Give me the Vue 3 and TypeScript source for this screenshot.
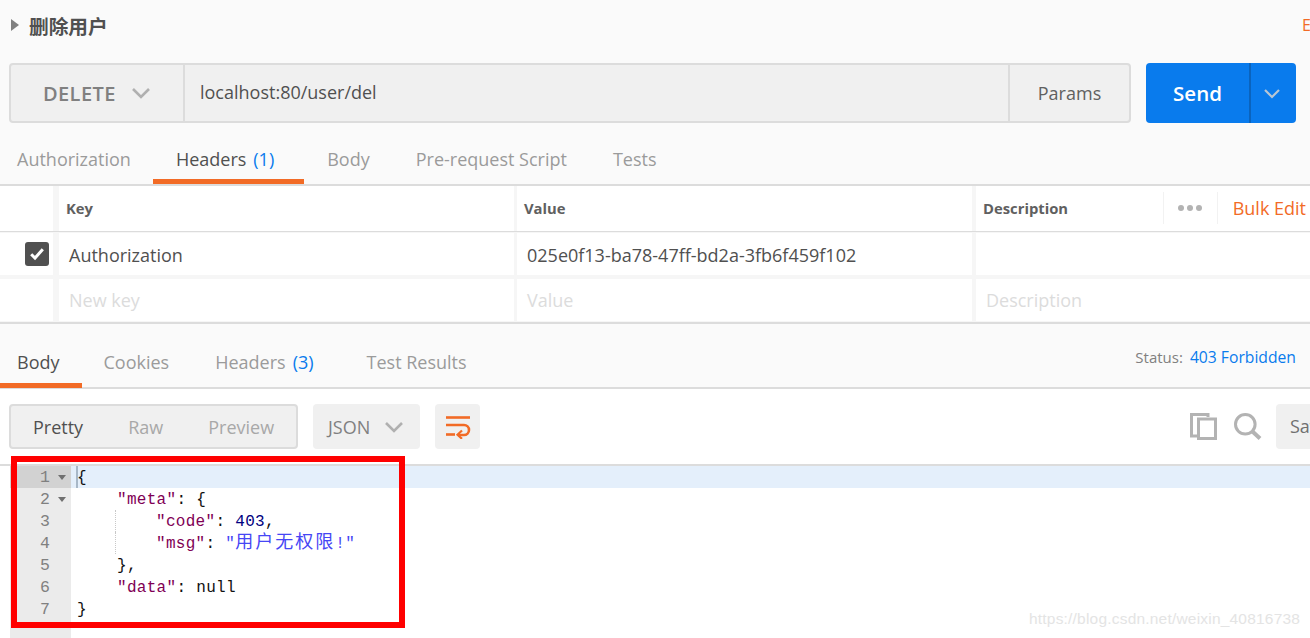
<script setup lang="ts">
interface Tab { label: string; count?: string; active?: boolean }
const requestTabs: Tab[] = [
  { label: 'Authorization' },
  { label: 'Headers', count: '(1)', active: true },
  { label: 'Body' },
  { label: 'Pre-request Script' },
  { label: 'Tests' },
]
const responseTabs: Tab[] = [
  { label: 'Body', active: true },
  { label: 'Cookies' },
  { label: 'Headers', count: '(3)' },
  { label: 'Test Results' },
]
const gutter = [1, 2, 3, 4, 5, 6, 7]
</script>

<template>
  <div class="page">
    <header class="title-row">
      <span class="caret"></span>
      <h1 class="title">删除用户</h1>
      <span class="edit">E</span>
    </header>

    <section class="url-row">
      <div class="url-bar">
        <div class="method">
          <span>DELETE</span>
          <svg class="chev" width="20" height="12" viewBox="0 0 20 12"><path d="M2 2l8 8 8-8" fill="none" stroke="#b0b0b0" stroke-width="2.6" /></svg>
        </div>
        <div class="url">localhost:80/user/del</div>
        <div class="params">Params</div>
      </div>
      <div class="send">
        <span class="send-label">Send</span>
        <span class="send-more">
          <svg width="18" height="11" viewBox="0 0 18 11"><path d="M2 2l7 7 7-7" fill="none" stroke="#b9c6d4" stroke-width="2.2" /></svg>
        </span>
      </div>
    </section>

    <nav class="tabs request-tabs">
      <div v-for="t in requestTabs" :key="t.label" class="tab" :class="{ active: t.active }">
        <span>{{ t.label }}</span><span v-if="t.count" class="count">{{ t.count }}</span>
      </div>
    </nav>

    <section class="table">
      <div class="row head">
        <div class="cell c0"></div>
        <div class="cell c1">Key</div>
        <div class="cell c2">Value</div>
        <div class="cell c3">
          <span>Description</span>
          <div class="head-tools">
            <span class="dots"><i></i><i></i><i></i></span>
            <span class="bulk">Bulk Edit</span>
          </div>
        </div>
      </div>
      <div class="row body-row first">
        <div class="cell c0">
          <span class="check">
            <svg width="16" height="14" viewBox="0 0 16 14"><path d="M2.2 7.300l3.800 3.800 7.800-8.800" fill="none" stroke="#fff" stroke-width="3" /></svg>
          </span>
        </div>
        <div class="cell c1">Authorization</div>
        <div class="cell c2">025e0f13-ba78-47ff-bd2a-3fb6f459f102</div>
        <div class="cell c3"></div>
      </div>
      <div class="row body-row second">
        <div class="cell c0"></div>
        <div class="cell c1 ph">New key</div>
        <div class="cell c2 ph">Value</div>
        <div class="cell c3 ph">Description</div>
      </div>
    </section>

    <section class="response-head">
      <nav class="tabs response-tabs">
        <div v-for="t in responseTabs" :key="t.label" class="tab" :class="{ active: t.active }">
          <span>{{ t.label }}</span><span v-if="t.count" class="count">{{ t.count }}</span>
        </div>
      </nav>
      <div class="status">Status:<span class="status-val">403 Forbidden</span></div>
    </section>

    <section class="toolbar">
      <div class="views">
        <span class="view on">Pretty</span>
        <span class="view">Raw</span>
        <span class="view">Preview</span>
      </div>
      <div class="format">
        <span>JSON</span>
        <svg width="20" height="12" viewBox="0 0 20 12"><path d="M2 2l8 8 8-8" fill="none" stroke="#b0b0b0" stroke-width="2.6" /></svg>
      </div>
      <div class="wrap">
        <svg width="26" height="24" viewBox="0 0 26 24" fill="none" stroke="#f26b26" stroke-width="2.6">
          <path d="M1 2.5h24" />
          <path d="M1 10h18a5 5 0 0 1 0 10h-6" />
          <path d="M1 19.500h9" />
          <path d="M17 15.500l-4.500 4.300 4.500 4" stroke-width="2.2" />
        </svg>
      </div>
      <div class="tools">
        <svg width="27" height="27" viewBox="0 0 27 27" fill="none" stroke="#b3b3b3" stroke-width="3">
          <path d="M18 4V1.500H1.500V23H7" />
          <rect x="8.500" y="6" width="17" height="19.500" />
        </svg>
        <svg class="search" width="28" height="27" viewBox="0 0 28 27" fill="none" stroke="#b3b3b3">
          <circle cx="11.300" cy="11.300" r="9.800" stroke-width="3" />
          <path d="M18.500 18.500l7.500 7" stroke-width="4" />
        </svg>
        <div class="save">Save</div>
      </div>
    </section>

    <section class="editor">
      <div class="gutter">
        <div v-for="n in gutter" :key="n" class="gnum" :class="{ cur: n === 1 }">
          <span>{{ n }}</span>
          <i v-if="n < 3" class="fold"></i>
        </div>
      </div>
      <div class="code">
        <div class="line cur"><span class="cursor"></span>{</div>
        <div class="line ind1"><span class="k">"meta"</span>: {</div>
        <div class="line ind2 guide"><span class="k">"code"</span>: <span class="n">403</span>,</div>
        <div class="line ind2 guide"><span class="k">"msg"</span>: <span class="s">"<span class="cjk">用户无权限</span>!"</span></div>
        <div class="line ind1">},</div>
        <div class="line ind1"><span class="k">"data"</span>: null</div>
        <div class="line">}</div>
      </div>
    </section>

    <div class="redbox"></div>
    <div class="mark">https://blog.csdn.net/weixin_40816738</div>
  </div>
</template>

<style>
html, body { margin: 0; background: #fff; }
</style>

<style scoped>
.page {
  position: relative;
  width: 1310px;
  height: 638px;
  overflow: hidden;
  background: #fff;
  font-family: "Open Sans", "Noto Sans CJK SC", sans-serif;
  font-size: 18px;
  color: #505050;
}
.title-row {
  height: 63px;
  box-sizing: border-box;
  padding: 0 0 13px 11px;
  display: flex;
  align-items: center;
  background: #fafafa;
}
.caret {
  width: 0;
  height: 0;
  border-left: 8px solid #808080;
  border-top: 6px solid transparent;
  border-bottom: 6px solid transparent;
  margin-right: 10px;
}
.title {
  margin: 0;
  font-size: 19.700px;
  font-weight: 700;
  color: #505050;
  font-family: "Noto Sans CJK SC", sans-serif;
}
.edit { margin-left: auto; color: #f26b26; font-size: 16px; margin-right: -1px; }

.url-row {
  height: 60px;
  display: flex;
  background: #fafafa;
  padding-left: 9px;
}
.url-bar {
  width: 1122px;
  display: flex;
  box-sizing: border-box;
  border: 2px solid #dcdcdc;
  border-radius: 4px;
  background: #f0f0f0;
}
.method {
  width: 174px;
  box-sizing: border-box;
  padding-left: 32px;
  display: flex;
  align-items: center;
  gap: 15px;
  border-right: 2px solid #dcdcdc;
  font-size: 20px;
  font-weight: 600;
  letter-spacing: 0.4px;
  color: #808080;
}
.url {
  flex: 1;
  padding-left: 15px;
  line-height: 55px;
}
.params {
  width: 121px;
  box-sizing: border-box;
  border-left: 2px solid #dcdcdc;
  text-align: center;
  line-height: 57px;
  color: #606060;
}
.send {
  width: 150px;
  margin-left: 15px;
  display: flex;
  background: #097bed;
  border-radius: 4px;
  color: #fff;
}
.send-label {
  width: 103px;
  text-align: center;
  font-size: 20.500px;
  font-weight: 600;
  line-height: 60px;
  border-right: 2px solid #0a63bd;
}
.send-more {
  flex: 1;
  display: flex;
  align-items: center;
  justify-content: center;
  padding-right: 4px;
}

.tabs { display: flex; }
.request-tabs {
  height: 63px;
  box-sizing: border-box;
  background: #fafafa;
  border-bottom: 2px solid #dcdcdc;
}
.tab {
  padding: 22px 23px 0;
  color: #9b9b9b;
  white-space: nowrap;
  height: 61px;
  box-sizing: border-box;
  line-height: 28px;
}
.tab:first-child { margin-left: -6px; padding-right: 22px; }
.tab.active {
  color: #505050;
  border-bottom: 5px solid #f26b26;
}
.count { color: #097bed; margin: 0 7px 0 7px; }

.table { background: #f6f6f6; }
.row {
  display: grid;
  grid-template-columns: 59px 458px 459px 1fr;
}
.cell {
  background: #fff;
  box-sizing: border-box;
  background-clip: padding-box;
}
.c0 { border-right: 6px solid #f6f6f6; display: flex; align-items: center; justify-content: flex-end; }
.c1 { border-right: 3px solid #f6f6f6; }
.c2 { border-right: 4px solid #f6f6f6; }
.head { height: 46px; border-bottom: 2px solid #dcdcdc; box-sizing: border-box; }
.head .cell {
  font-size: 14.800px;
  font-weight: 700;
  color: #606060;
  line-height: 45px;
  padding-left: 7px;
}
.head .c0 { padding: 0; }
.head .c3 { display: flex; }
.head-tools { margin-left: auto; display: flex; align-items: center; height: 32px; margin-top: 6px; }
.dots {
  display: flex;
  gap: 3px;
  height: 32px;
  align-items: center;
  padding: 0 15px 0 14px;
  border-left: 1px solid #f2f2f2;
  border-right: 1px solid #f2f2f2;
}
.dots i { width: 6px; height: 6px; border-radius: 50%; background: #b3b3b3; }
.bulk {
  font-size: 18px;
  font-weight: 400;
  color: #f26b26;
  padding: 0 4px 0 15px;
}
.body-row .cell { padding-left: 10px; line-height: 44px; height: 42px; }
.body-row .c0 { padding: 0; }
.body-row.first { padding-top: 1px; height: 46px; box-sizing: border-box; }
.body-row.second { padding-top: 1px; height: 46px; box-sizing: border-box; border-bottom: 2px solid #dcdcdc; }
.body-row.second .cell { line-height: 42px; }
.ph { color: #dcdcdc; }
.check {
  width: 24px;
  height: 24px;
  margin-right: 4px;
  border-radius: 3px;
  background: #505050;
  display: flex;
  align-items: center;
  justify-content: center;
}

.response-head {
  height: 65px;
  box-sizing: border-box;
  display: flex;
  background: #fafafa;
  border-bottom: 2px solid #dcdcdc;
}
.response-tabs { flex: 1; }
.response-tabs .tab { height: 64px; padding-top: 24px; }
.response-tabs .tab:nth-child(2) { margin-left: -1px; }
.status {
  font-size: 15px;
  color: #808080;
  padding: 22px 14px 0 0;
}
.status-val { color: #097bed; font-size: 15.700px; margin-left: 7px; }

.toolbar {
  height: 75px;
  box-sizing: border-box;
  padding: 15px 0 15px 9px;
  display: flex;
  gap: 15px;
}
.views {
  width: 289px;
  box-sizing: border-box;
  border: 2px solid #dcdcdc;
  border-radius: 4px;
  background: #f0f0f0;
  display: flex;
  align-items: center;
  padding-left: 22px;
  gap: 45px;
  color: #a8a8a8;
}
.view.on { color: #505050; }
.format {
  width: 107px;
  box-sizing: border-box;
  padding-left: 15px;
  background: #f0f0f0;
  border-radius: 4px;
  display: flex;
  align-items: center;
  gap: 14px;
  color: #808080;
}
.wrap {
  width: 45px;
  background: #f0f0f0;
  border-radius: 4px;
  display: flex;
  align-items: center;
  justify-content: center;
}
.tools {
  margin-left: auto;
  display: flex;
  align-items: center;
  gap: 17px;
  margin-right: -50px;
}
.search { margin-right: -3px; }
.save {
  width: 84px;
  height: 45px;
  box-sizing: border-box;
  padding-left: 14px;
  background: #f0f0f0;
  border-radius: 4px;
  line-height: 45px;
  color: #707070;
}

.editor {
  display: flex;
  height: 174px;
  border-top: 2px solid #dcdcdc;
  padding-left: 10px;
}
.gutter {
  width: 61px;
  height: 174px;
  background: #ebebeb;
  flex: none;
}
.gnum {
  height: 22px;
  line-height: 23px;
  font-family: "Liberation Mono", monospace;
  font-size: 16.500px;
  color: #808080;
  text-align: right;
  padding-right: 21px;
  position: relative;
}
.gnum.cur { background: #d2d2d2; }
.fold {
  position: absolute;
  right: 5px;
  top: 9px;
  width: 0;
  height: 0;
  border-top: 5px solid #707070;
  border-left: 4px solid transparent;
  border-right: 4px solid transparent;
}
.code {
  flex: 1;
  font-family: "Liberation Mono", "Noto Sans CJK SC", monospace;
  font-size: 16px;
  letter-spacing: 0.300px;
  color: #111;
}
.line {
  height: 22px;
  line-height: 25px;
  white-space: pre;
  position: relative;
  padding-left: 6px;
}
.line.ind1 { padding-left: 46px; }
.line.ind2 { padding-left: 85px; }
.line.cur { background: #e4effb; }
.cursor {
  position: absolute;
  left: 5px;
  top: 0;
  width: 2px;
  height: 22px;
  background: #a8b8c8;
}
.guide::before {
  content: "";
  position: absolute;
  left: 44px;
  top: 0;
  bottom: 0;
  border-left: 1px dotted #c8c8c8;
}
.k { color: #7f0055; }
.n { color: #000080; }
.s { color: #4646f5; }
.cjk { font-size: 18px; letter-spacing: 2px; line-height: 1; }

.redbox {
  position: absolute;
  left: 11px;
  top: 456px;
  width: 394px;
  height: 172px;
  box-sizing: border-box;
  border: 6px solid #ff0000;
}
.mark {
  position: absolute;
  left: 1029px;
  top: 610px;
  font-family: "Liberation Sans", sans-serif;
  font-size: 15.500px;
  letter-spacing: 0.200px;
  color: #e4e4e4;
}
</style>
